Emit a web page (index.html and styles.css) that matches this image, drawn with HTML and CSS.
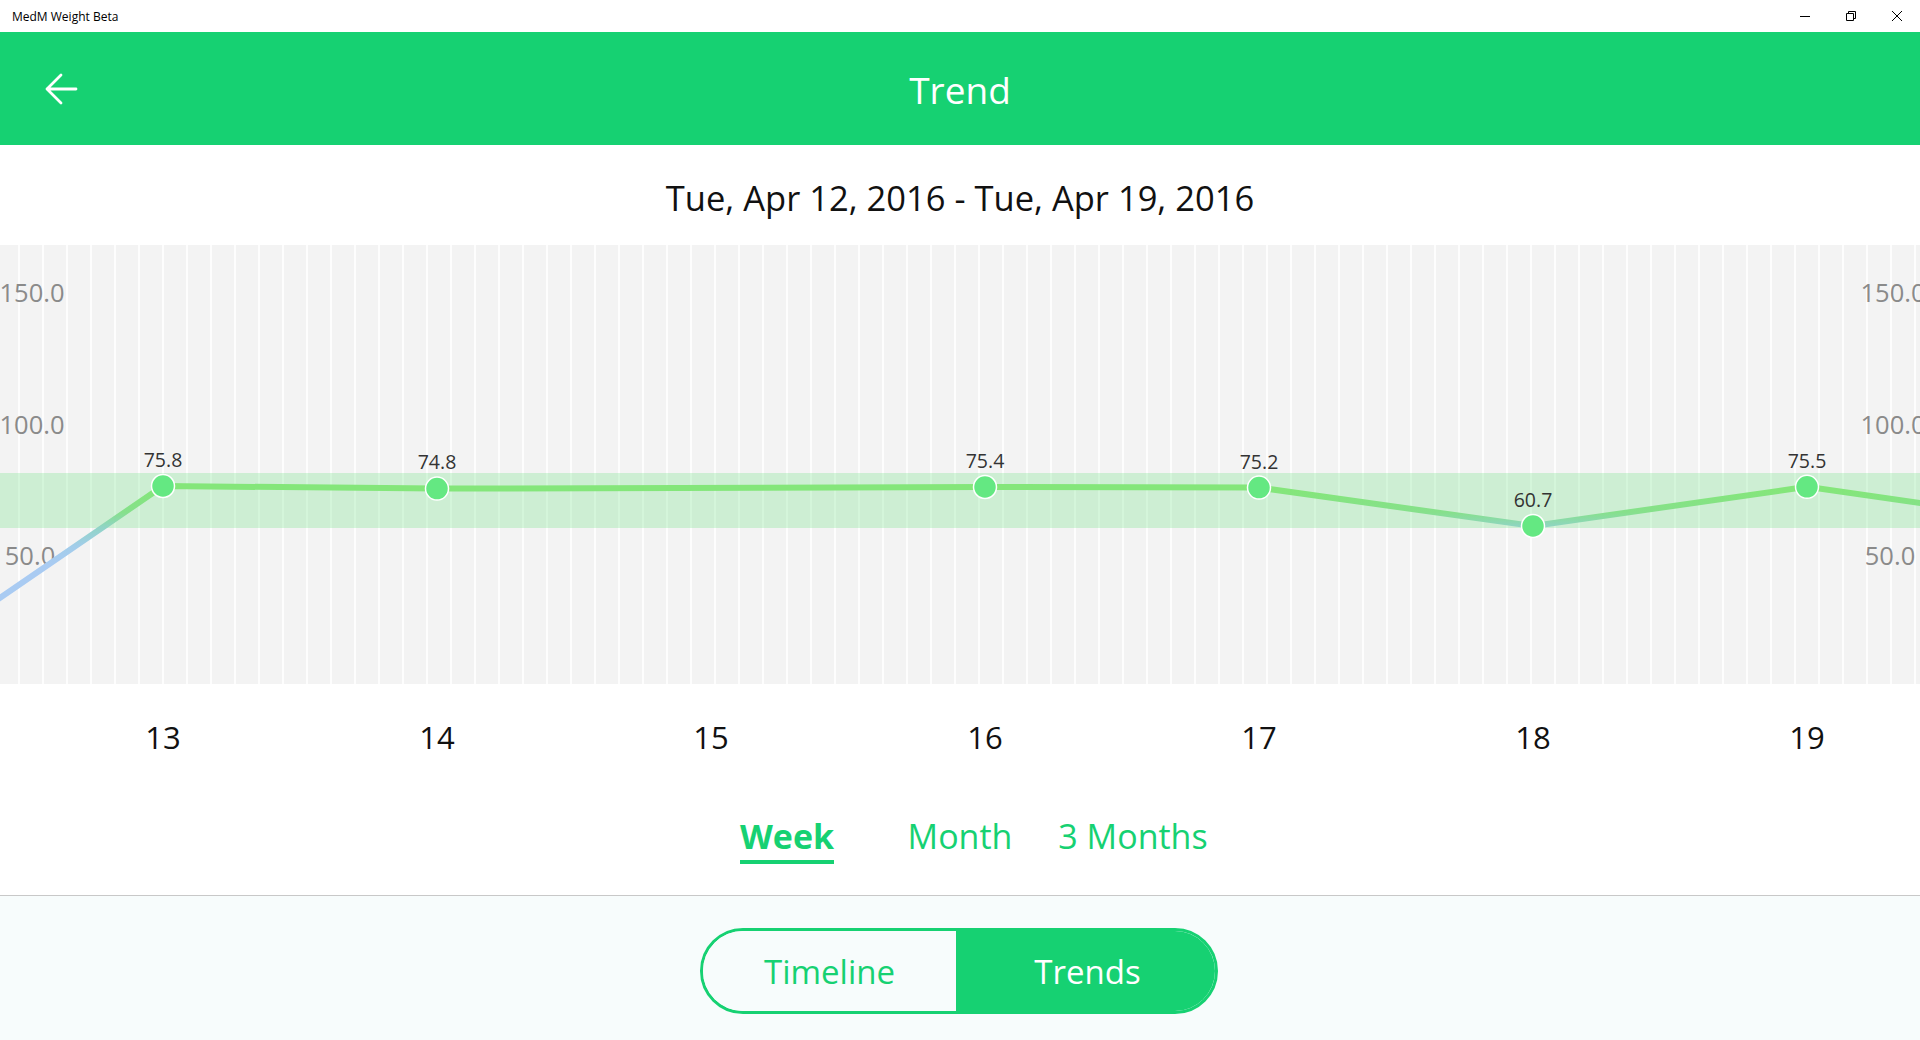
FILE: index.html
```html
<!DOCTYPE html>
<html lang="en">
<head>
<meta charset="utf-8">
<title>MedM Weight Beta</title>
<link rel="stylesheet" href="styles.css">
</head>
<body>
<div class="app">
  <div class="titlebar">
    <span class="app-name">MedM Weight Beta</span>
    <div class="win-controls">
      <span class="win-btn"><svg width="10" height="10" viewBox="0 0 10 10"><path d="M0 5.5H10" stroke="#000" stroke-width="1"/></svg></span>
      <span class="win-btn"><svg width="10" height="10" viewBox="0 0 10 10"><path d="M0.5 2.5H7.5V9.5H0.5Z M2.5 2.5V0.5H9.5V7.5H7.5" fill="none" stroke="#000" stroke-width="1"/></svg></span>
      <span class="win-btn"><svg width="10" height="10" viewBox="0 0 10 10"><path d="M0 0L10 10M10 0L0 10" stroke="#000" stroke-width="1"/></svg></span>
    </div>
  </div>
  <header class="header">
    <div class="back"><svg width="34" height="32" viewBox="0 0 34 32"><path d="M32 16H3M17 2L3 16L17 30" fill="none" stroke="#fff" stroke-width="2.8" stroke-linecap="round" stroke-linejoin="round"/></svg></div>
    <h1 class="title">Trend</h1>
    <div></div>
  </header>
  <div class="daterow">Tue, Apr 12, 2016 - Tue, Apr 19, 2016</div>
  <svg class="chart" width="1920" height="439" viewBox="0 0 1920 439">
    <defs>
      <pattern id="stripes" patternUnits="userSpaceOnUse" width="24" height="439">
        <rect x="0" y="0" width="24" height="439" fill="#f3f3f3"/>
        <rect x="18" y="0" width="2" height="439" fill="#fdfdfd"/>
      </pattern>
      <linearGradient id="lineGrad" gradientUnits="userSpaceOnUse" x1="0" y1="245" x2="0" y2="320">
        <stop offset="0" stop-color="#84e67a"/>
        <stop offset="0.3" stop-color="#86e08c"/>
        <stop offset="0.5" stop-color="#90d4c6"/>
        <stop offset="0.75" stop-color="#a2cdea"/>
        <stop offset="1" stop-color="#a9cbf2"/>
      </linearGradient>
    </defs>
    <rect x="0" y="0" width="1920" height="439" fill="url(#stripes)"/>
    <rect x="0" y="228" width="1920" height="55" fill="rgba(120,228,140,0.3)"/>
    <g class="axis">
      <text x="32" y="57">150.0</text>
      <text x="32" y="189">100.0</text>
      <text x="30" y="320">50.0</text>
      <text x="1893" y="57">150.0</text>
      <text x="1893" y="189">100.0</text>
      <text x="1890" y="320">50.0</text>
    </g>
    <polyline points="-111,429 163,241 437,243.6 985,242 1259,242.6 1533,281 1807,241.8 2081,281" fill="none" stroke="url(#lineGrad)" stroke-width="6" stroke-linejoin="round"/>
    <g class="pts">
      <circle cx="163" cy="241" r="11.5"/>
      <circle cx="437" cy="243.6" r="11.5"/>
      <circle cx="985" cy="242" r="11.5"/>
      <circle cx="1259" cy="242.6" r="11.5"/>
      <circle cx="1533" cy="281" r="11.5"/>
      <circle cx="1807" cy="241.8" r="11.5"/>
    </g>
    <g class="vals">
      <text x="163" y="222">75.8</text>
      <text x="437" y="224">74.8</text>
      <text x="985" y="223">75.4</text>
      <text x="1259" y="224">75.2</text>
      <text x="1533" y="262">60.7</text>
      <text x="1807" y="223">75.5</text>
    </g>
  </svg>
  <div class="days">
    <span class="day">13</span>
    <span class="day">14</span>
    <span class="day">15</span>
    <span class="day">16</span>
    <span class="day">17</span>
    <span class="day">18</span>
    <span class="day">19</span>
  </div>
  <nav class="tabs">
    <div class="tab"><span class="tab-label active">Week</span></div>
    <div class="tab"><span class="tab-label">Month</span></div>
    <div class="tab"><span class="tab-label">3 Months</span></div>
  </nav>
  <footer class="bottom">
    <div class="segment">
      <div class="seg seg-off">Timeline</div>
      <div class="seg seg-on">Trends</div>
    </div>
  </footer>
</div>
</body>
</html>
```
FILE: styles.css
```css
* { box-sizing: border-box; }
html, body { margin: 0; padding: 0; }
body {
  width: 1920px;
  height: 1040px;
  overflow: hidden;
  background: #fff;
  font-family: "Open Sans", "Noto Sans", sans-serif;
  color: #111;
}
.app { display: flex; flex-direction: column; height: 1040px; }

.titlebar {
  height: 32px;
  display: flex;
  align-items: center;
  justify-content: space-between;
  background: #fff;
  padding-left: 12px;
}
.app-name { font-size: 12px; color: #000; }
.win-controls { display: flex; height: 32px; }
.win-btn {
  width: 46px;
  height: 32px;
  display: flex;
  align-items: center;
  justify-content: center;
}

.header {
  height: 113px;
  background: #16d172;
  display: grid;
  grid-template-columns: 1fr auto 1fr;
  align-items: center;
}
.back { padding-left: 44px; display: flex; align-items: center; padding-top: 1px; }
.title {
  margin: 0;
  font-weight: 400;
  font-size: 37px;
  color: #fff;
  line-height: 1;
  padding-top: 2px;
}

.daterow {
  height: 100px;
  display: flex;
  align-items: center;
  justify-content: center;
  font-size: 34.5px;
  color: #111;
  padding-top: 4px;
}

.chart { display: block; flex: 0 0 auto; }
.axis text {
  font-family: "Open Sans", "Noto Sans", sans-serif;
  font-size: 25.5px;
  fill: #8a8a8a;
  text-anchor: middle;
}
.pts circle { fill: #64e882; stroke: #fff; stroke-width: 1.5; }
.vals text {
  font-family: "Open Sans", "Noto Sans", sans-serif;
  font-size: 19.5px;
  fill: #333;
  text-anchor: middle;
}

.days {
  height: 106px;
  display: flex;
  align-items: center;
  padding-left: 26px;
  overflow: hidden;
}
.day {
  flex: 0 0 274px;
  text-align: center;
  font-size: 31px;
  color: #111;
}

.tabs {
  height: 106px;
  display: flex;
  justify-content: center;
  border-bottom: 1px solid #c8c8c8;
  padding-top: 22px;
}
.tab {
  width: 173px;
  display: flex;
  justify-content: center;
  align-items: flex-start;
}
.tab-label {
  font-size: 34px;
  line-height: 48px;
  color: #16d172;
  border-bottom: 4px solid transparent;
}
.tab-label.active { font-weight: 700; border-bottom-color: #16d172; }

.bottom {
  flex: 1;
  background: #f7fcfc;
  display: flex;
  justify-content: center;
  padding-top: 32px;
}
.segment {
  width: 518px;
  height: 86px;
  border: 3px solid #16d172;
  border-radius: 43px;
  display: flex;
  overflow: hidden;
  margin-left: -2px;
}
.seg {
  display: flex;
  align-items: center;
  justify-content: center;
  font-size: 33px;
}
.seg-off { flex: 0 0 253px; color: #16d172; background: #f7fcfc; }
.seg-on { flex: 1; color: #fff; background: #16d172; padding-left: 4px; }
```
